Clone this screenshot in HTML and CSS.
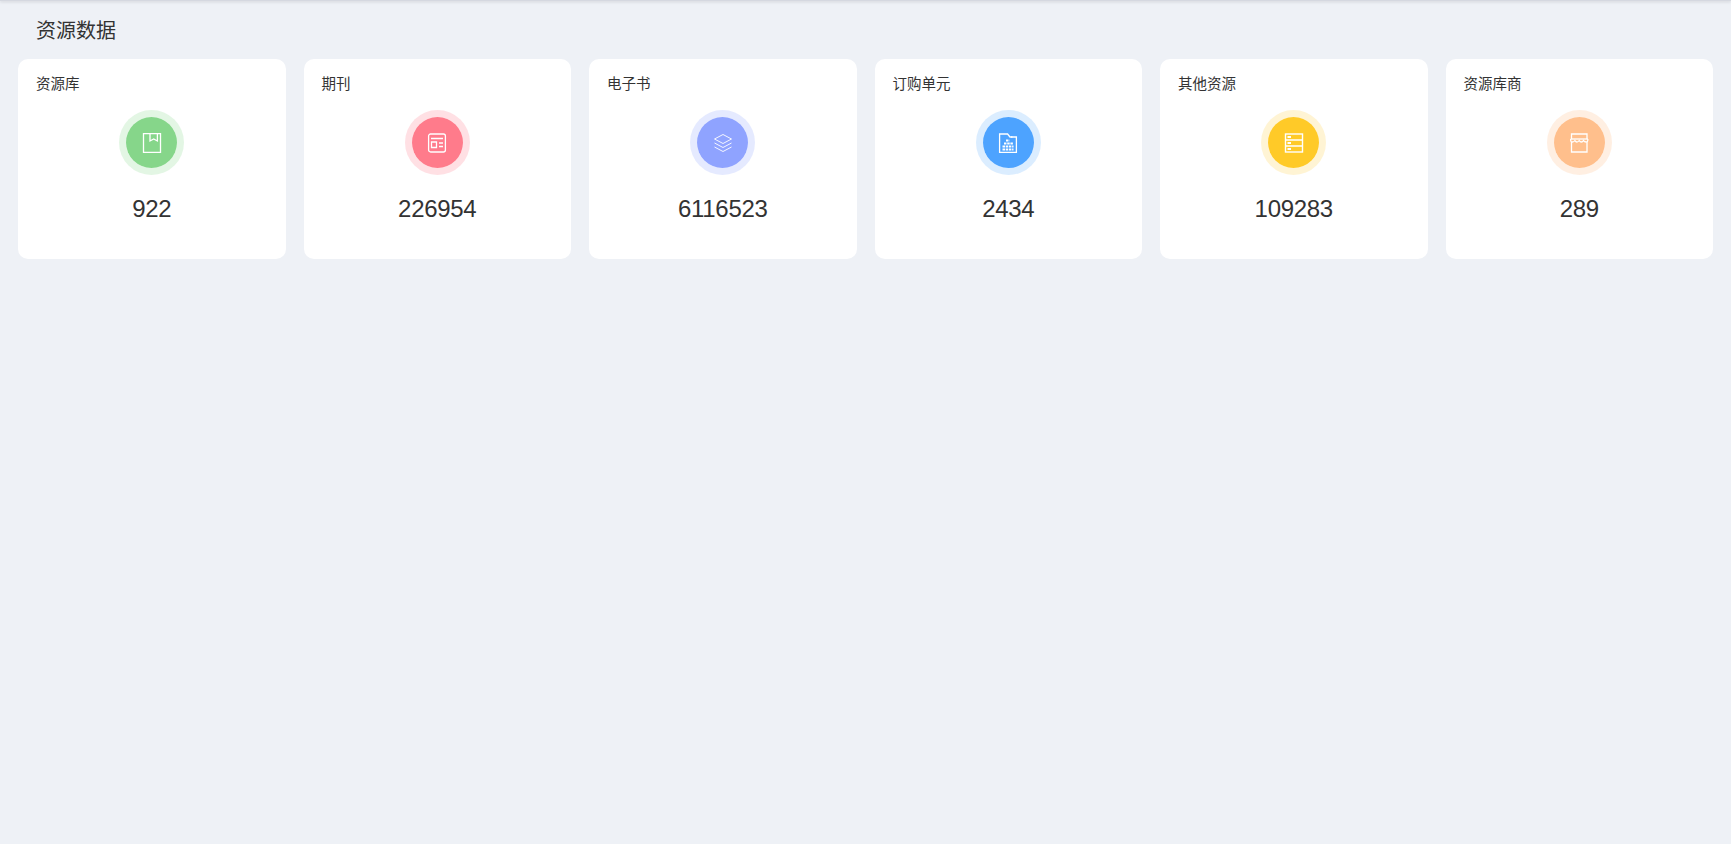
FILE: index.html
```html
<!DOCTYPE html>
<html lang="zh-CN">
<head>
  <meta charset="UTF-8">
  <meta name="viewport" content="width=device-width, initial-scale=1.0">
  <title>资源数据</title>
  <link rel="stylesheet" href="styles.css">
</head>
<body>
  <div class="topbar"></div>
  <div class="page">
    <h1 class="page-title">资源数据</h1>
    <div class="card-row">
      <div class="card">
        <div class="card-label">资源库</div>
        <div class="icon-ring ring-green">
          <svg class="icon" viewBox="0 0 20 20">
            <path d="M1.500 .6h17v18.800h-17z"/>
            <path d="M8 .6v7.400l3.700-2 3.700 2V.6"/>
          </svg>
        </div>
        <div class="card-num">922</div>
      </div>
      <div class="card">
        <div class="card-label">期刊</div>
        <div class="icon-ring ring-pink">
          <svg class="icon" viewBox="0 0 20 20">
            <rect x="1.600" y="1" width="16.800" height="18" rx="2"/>
            <path d="M4 5.500h12M4.500 9h5v5.500h-5zM12 10h4M12 13.500h4"/>
          </svg>
        </div>
        <div class="card-num">226954</div>
      </div>
      <div class="card">
        <div class="card-label">电子书</div>
        <div class="icon-ring ring-indigo">
          <svg class="icon icon-thin" viewBox="0 0 20 20">
            <path d="M10 1.500l8.500 4.500-8.500 4.500-8.500-4.500z"/>
            <path d="M1.500 10l8.500 4.500 8.500-4.500"/>
            <path d="M1.500 14l8.500 4.500 8.500-4.500"/>
          </svg>
        </div>
        <div class="card-num">6116523</div>
      </div>
      <div class="card">
        <div class="card-label">订购单元</div>
        <div class="icon-ring ring-blue">
          <svg class="icon" viewBox="0 0 20 20">
            <path d="M1.600 19.400V1h8l2.400 3h6.400v15.400z"/>
            <path d="M13 4h1.500"/>
            <path class="cells" d="M8 7.500h3.500M6 10.500h9.500M4.500 13.500h11M4.500 16.500h11"/>
          </svg>
        </div>
        <div class="card-num">2434</div>
      </div>
      <div class="card">
        <div class="card-label">其他资源</div>
        <div class="icon-ring ring-yellow">
          <svg class="icon icon-bold" viewBox="0 0 20 20">
            <rect x="1.500" y="1" width="17" height="18"/>
            <path d="M1.500 7h17M1.500 13h17"/>
            <path class="marks" d="M3.500 4h3.500M3.500 10h3.500M3.500 16h3.500"/>
          </svg>
        </div>
        <div class="card-num">109283</div>
      </div>
      <div class="card">
        <div class="card-label">资源库商</div>
        <div class="icon-ring ring-orange">
          <svg class="icon" viewBox="0 0 20 20">
            <path d="M2.500 9v10h15.500V9"/>
            <path d="M2.500 6V1h15.500v5"/>
            <path d="M1.700 6h17.100"/>
            <path d="M1.700 6v1.500c0 2 3 2 4.200 0 1 2 3 2 4.300 0 1.100 2 3.200 2 4.300 0 1.100 2 4.300 2 4.300 0V6"/>
          </svg>
        </div>
        <div class="card-num">289</div>
      </div>
    </div>
  </div>
</body>
</html>
```

FILE: styles.css
```css
html, body {
  margin: 0;
  height: 100%;
}

body {
  background-color: #eef1f6;
  color: #333;
  font-family: "Liberation Sans", Arial, "Noto Sans CJK SC", sans-serif;
}

.topbar {
  height: 1px;
  background-color: #d5d8e0;
  box-shadow: 0 1px 3px rgba(0, 0, 0, 0.2);
}

.page {
  padding: 0 18px;
}

.page-title {
  margin: 0;
  padding: 16px 0 0 18px;
  height: 42px;
  font-size: 20px;
  font-weight: normal;
  line-height: 28px;
}

.card-row {
  display: grid;
  grid-template-columns: repeat(6, 1fr);
  gap: 18px;
}

.card {
  display: flex;
  flex-direction: column;
  align-items: center;
  box-sizing: border-box;
  height: 200px;
  padding: 15px 18px 0;
  background-color: #fff;
  border-radius: 10px;
}

.card-label {
  align-self: flex-start;
  height: 20px;
  font-size: 14.500px;
  line-height: 20px;
}

.icon-ring {
  display: flex;
  align-items: center;
  justify-content: center;
  box-sizing: border-box;
  width: 65px;
  height: 65px;
  margin-top: 16px;
  border-radius: 50%;
  border: 7.500px solid;
  background-clip: padding-box;
}

.icon {
  width: 20px;
  height: 20px;
  fill: none;
  stroke: #fff;
  stroke-width: 1.300;
}

.icon-thin {
  stroke-width: 0.900;
}

.icon-bold {
  stroke-width: 1.400;
}

.icon .cells {
  stroke-width: 1.800;
  stroke-dasharray: 2.500 0.700;
}

.icon .marks {
  stroke-width: 1.800;
}

.ring-green { background-color: #86d68a; border-color: rgba(134, 214, 138, 0.23); }
.ring-pink { background-color: #ff7b8b; border-color: rgba(255, 123, 139, 0.23); }
.ring-indigo { background-color: #8fa3ff; border-color: rgba(143, 163, 255, 0.23); }
.ring-blue { background-color: #4da3ff; border-color: rgba(77, 163, 255, 0.2); }
.ring-yellow { background-color: #ffca28; border-color: rgba(255, 202, 40, 0.2); }
.ring-orange { background-color: #ffbf8c; border-color: rgba(255, 191, 140, 0.25); }

.card-num {
  margin-top: 19px;
  font-size: 24px;
  line-height: 30px;
  letter-spacing: -0.300px;
}
```
